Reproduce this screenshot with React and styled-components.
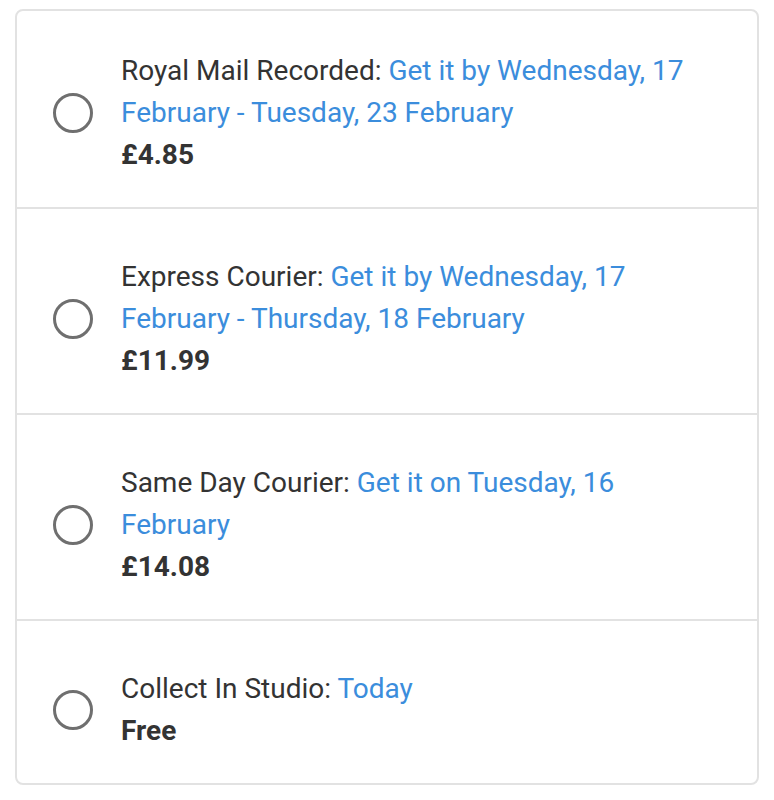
import React from "react";
import styled, { createGlobalStyle } from "styled-components";

const GlobalStyle = createGlobalStyle`
  body {
    margin: 0;
    background: #ffffff;
    font-family: Roboto, "Liberation Sans", Arial, sans-serif;
  }
`;

const Page = styled.div`
  padding: 9px 15px 17px;
`;

const Card = styled.div`
  border: 2px solid #e2e2e2;
  border-radius: 8px;
  overflow: hidden;
`;

const Option = styled.label`
  display: flex;
  align-items: center;
  gap: 28px;
  padding: ${(p) => (p.$first ? "39px" : "47px")} 40px 31px 36px;
  border-top: ${(p) => (p.$first ? "none" : "2px solid #e2e2e2")};
  cursor: pointer;
`;

const Radio = styled.span`
  flex: none;
  width: 40px;
  height: 40px;
  box-sizing: border-box;
  border: 3px solid #6f6f6f;
  border-radius: 50%;
`;

const Info = styled.div`
  font-size: 28px;
  line-height: 42px;
  color: #333333;
`;

const Name = styled.span`
  color: #333333;
`;

const When = styled.span`
  color: #3b8ddc;
`;

const Price = styled.div`
  font-weight: 700;
  color: #333333;
`;

const options = [
  {
    name: "Royal Mail Recorded",
    when: "Get it by Wednesday, 17 February - Tuesday, 23 February",
    price: "£4.85",
  },
  {
    name: "Express Courier",
    when: "Get it by Wednesday, 17 February - Thursday, 18 February",
    price: "£11.99",
  },
  {
    name: "Same Day Courier",
    when: "Get it on Tuesday, 16 February",
    price: "£14.08",
  },
  {
    name: "Collect In Studio",
    when: "Today",
    price: "Free",
  },
];

const App = () => {
  return (
    <Page>
      <GlobalStyle />
      <Card>
        {options.map((o, i) => (
          <Option key={o.name} $first={i === 0}>
            <Radio />
            <Info>
              <div>
                <Name>{o.name}: </Name>
                <When>{o.when}</When>
              </div>
              <Price>{o.price}</Price>
            </Info>
          </Option>
        ))}
      </Card>
    </Page>
  );
};

export default App;
